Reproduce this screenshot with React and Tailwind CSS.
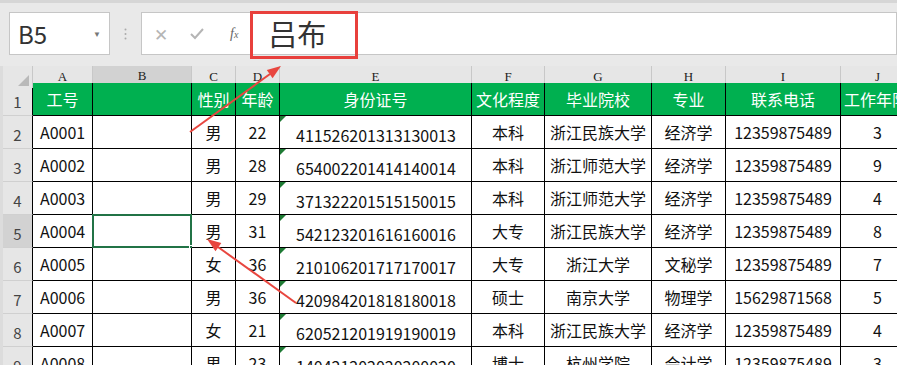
import React from "react";

const font = { fontFamily: '"Noto Sans CJK SC", "Noto Sans", sans-serif' };

const letters = ["A", "B", "C", "D", "E", "F", "G", "H", "I", "J"];

const head = ["工号", "", "性别", "年龄", "身份证号", "文化程度", "毕业院校", "专业", "联系电话", "工作年限"];

const rows = [
  ["A0001", "", "男", "22", "411526201313130013", "本科", "浙江民族大学", "经济学", "12359875489", "3"],
  ["A0002", "", "男", "28", "654002201414140014", "本科", "浙江师范大学", "经济学", "12359875489", "9"],
  ["A0003", "", "男", "29", "371322201515150015", "本科", "浙江师范大学", "经济学", "12359875489", "4"],
  ["A0004", "", "男", "31", "542123201616160016", "大专", "浙江民族大学", "经济学", "12359875489", "8"],
  ["A0005", "", "女", "36", "210106201717170017", "大专", "浙江大学", "文秘学", "12359875489", "7"],
  ["A0006", "", "男", "36", "420984201818180018", "硕士", "南京大学", "物理学", "15629871568", "5"],
  ["A0007", "", "女", "21", "620521201919190019", "本科", "浙江民族大学", "经济学", "12359875489", "4"],
  ["A0008", "", "男", "23", "140421202020200020", "博士", "杭州学院", "会计学", "12359875489", "3"],
];

// first column is 30px + the 3px window edge on the left
const grid = "grid grid-cols-[30px_60px_99px_44px_44px_192px_73px_107px_74px_115px_74px]";

function FormulaBar() {
  return (
    <div className="relative h-[66px] bg-[#e9e9e9] border-t-[3px] border-[#d6d6d6]">
      <div className="flex items-start pt-[9px]">
        <div className="ml-[9px] flex h-[43px] w-[101px] items-center justify-between border border-[#c6c6c6] bg-white pl-[8px] pr-[8px]">
          <span className="text-[24px] text-[#333]" style={font}>B5</span>
          <span className="text-[8px] text-[#777]">▼</span>
        </div>
        <div className="flex h-[43px] w-[31px] items-center justify-center">
          <svg width="3" height="12" viewBox="0 0 3 12">
            <circle cx="1.5" cy="1.5" r="1" fill="#aaa" />
            <circle cx="1.5" cy="6" r="1" fill="#aaa" />
            <circle cx="1.5" cy="10.5" r="1" fill="#aaa" />
          </svg>
        </div>
        <div className="flex h-[43px] flex-1 items-center border border-[#c6c6c6] bg-white">
          <span className="ml-[12px] text-[17px] text-[#b5b5b5]" style={font}>✕</span>
          <svg className="ml-[22px]" width="14" height="12" viewBox="0 0 14 12">
            <path d="M1 6 L5 10 L13 1" fill="none" stroke="#b5b5b5" strokeWidth="2" />
          </svg>
          <span className="ml-[26px] text-[14px] italic text-[#666]" style={{ fontFamily: '"Liberation Serif", serif' }}>
            f<span className="text-[10px]">x</span>
          </span>
          <span className="ml-[30px] text-[29px] text-[#333]" style={font}>吕布</span>
        </div>
      </div>
      <div className="absolute left-[250px] top-[8px] h-[48px] w-[108px] border-[3px] border-[#e8403c]" />
    </div>
  );
}

function ColHeaders() {
  return (
    <div className={`${grid} h-[17px] bg-[#e6e6e6]`}>
      <div className="relative border-r border-[#c8c8c8]">
        <div
          className="absolute bottom-[2px] right-[3px]"
          style={{ width: 0, height: 0, borderBottom: "11px solid #b9b9b9", borderLeft: "11px solid transparent" }}
        />
      </div>
      {letters.map((l) => (
        <div
          key={l}
          className={`flex items-center justify-center border-r border-[#c8c8c8] text-[13px] text-[#222] ${l === "B" ? "bg-[#d2d2d2] border-b-2 border-b-[#217346]" : ""}`}
          style={{ fontFamily: '"Liberation Serif", serif' }}
        >
          {l}
        </div>
      ))}
    </div>
  );
}

function RowNum({ n, active }) {
  return (
    <div className={`flex items-end justify-center border-b border-r border-b-[#d0d0d0] border-r-black pb-[2px] text-[15px] text-[#444] ${active ? "bg-[#d2d2d2]" : "bg-[#e6e6e6]"}`} style={font}>
      {n}
    </div>
  );
}

function HeaderRow() {
  return (
    <div className={`${grid} h-[33px]`}>
      <RowNum n="1" />
      {head.map((h, i) => (
        <div key={i} className={`flex items-center overflow-hidden whitespace-nowrap border-b border-r border-black bg-[#00b050] text-[16px] text-white ${i === 9 ? "justify-start pl-[3px]" : "justify-center"}`} style={font}>
          {h}
        </div>
      ))}
    </div>
  );
}

function DataRow({ r, n }) {
  const sel = n === 5;
  return (
    <div className={`${grid} h-[33px]`}>
      <RowNum n={String(n)} active={sel} />
      {r.map((v, i) => {
        const left = i === 0 || i === 4;
        return (
          <div
            key={i}
            className={`relative flex whitespace-nowrap border-b border-r border-black bg-white text-[16px] text-[#111] ${left ? "justify-start" : "justify-center"} ${i === 0 ? "pl-[7px]" : ""} ${i === 4 ? "items-end pb-[1px] pl-[16px]" : "items-center"}`}
            style={font}
          >
            {i === 4 ? (
              <div className="absolute left-0 top-0 h-0 w-0 border-r-[6px] border-t-[6px] border-r-transparent border-t-[#1e7b34]" />
            ) : null}
            {v}
            {i === 1 && sel ? (
              <>
                <div className="absolute inset-[-1px] border-2 border-[#217346]" />
                <div className="absolute bottom-[-4px] right-[-4px] h-[6px] w-[6px] border border-white bg-[#217346]" />
              </>
            ) : null}
          </div>
        );
      })}
    </div>
  );
}

function Arrows() {
  return (
    <svg className="pointer-events-none absolute left-0 top-0" width="897" height="365">
      <line x1="190" y1="132" x2="270" y2="74" stroke="#e8463f" strokeWidth="2" />
      <polygon points="281,66 272.6,78.3 266.8,70.1" fill="#e8463f" />
      <line x1="296" y1="303" x2="218" y2="247" stroke="#e8463f" strokeWidth="2" />
      <polygon points="207,239 221.3,243.1 215.5,251.3" fill="#e8463f" />
    </svg>
  );
}

export default function App() {
  return (
    <div className="relative h-[365px] w-[897px] overflow-hidden bg-white">
      <FormulaBar />
      <div className="relative border-l-[3px] border-[#dcdcdc]">
        <ColHeaders />
        <HeaderRow />
        {rows.map((r, i) => (
          <DataRow key={i} r={r} n={i + 2} />
        ))}
      </div>
      <Arrows />
    </div>
  );
}
